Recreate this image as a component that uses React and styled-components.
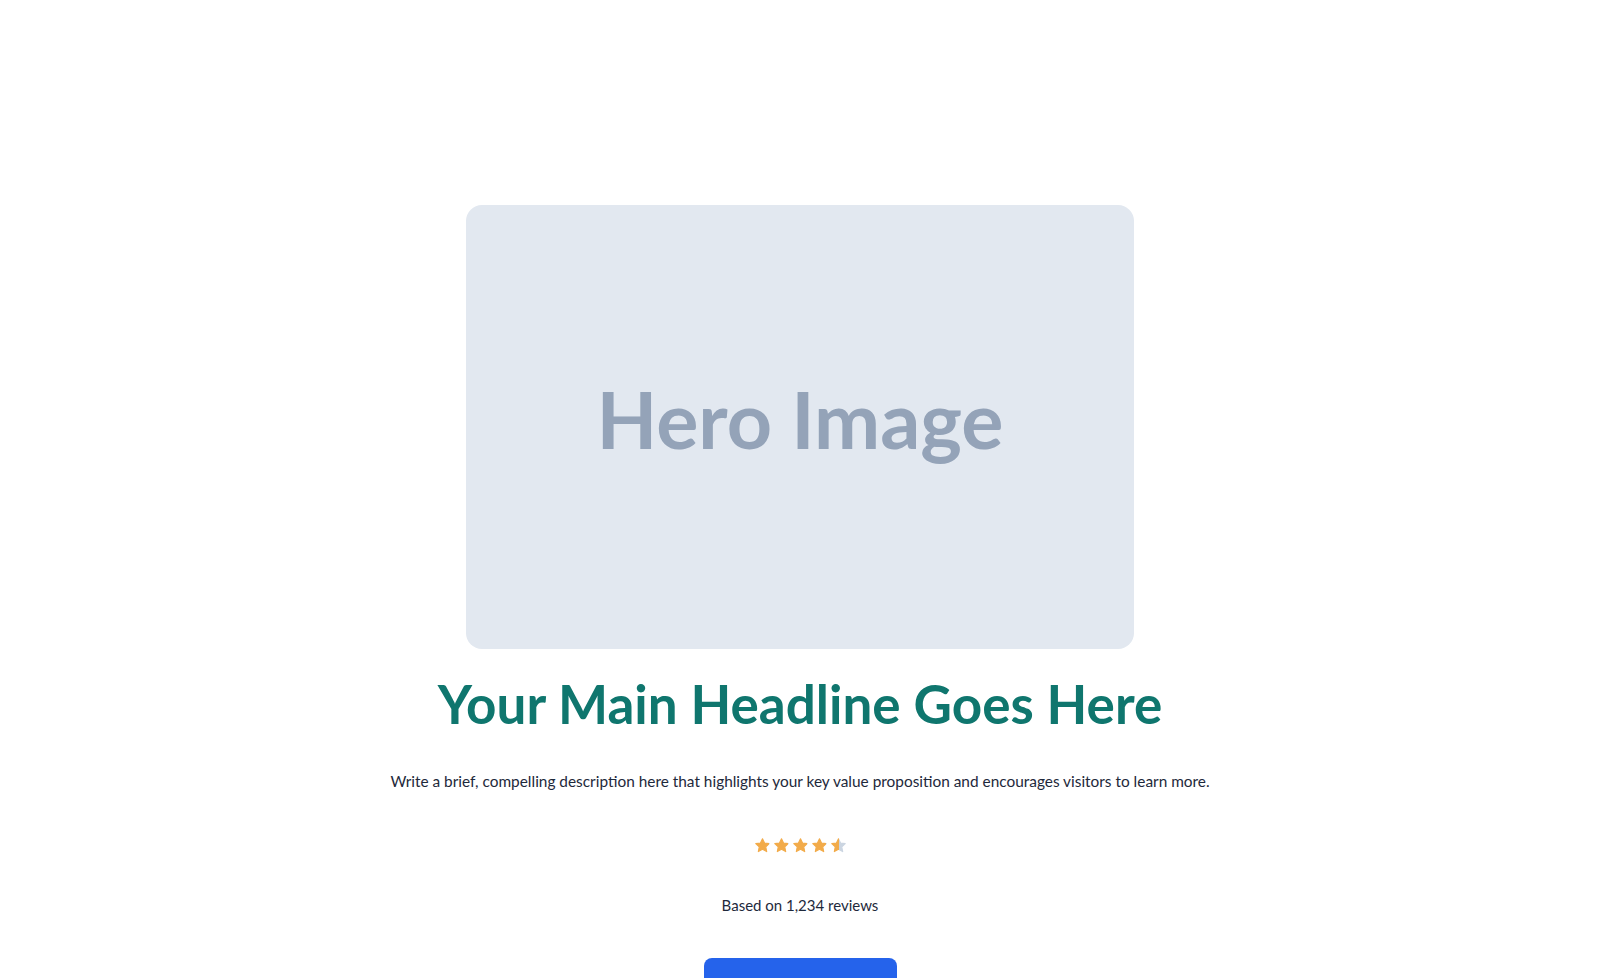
import React from 'react';
import styled, { createGlobalStyle } from 'styled-components';

const GlobalStyle = createGlobalStyle`
	html, body {
		margin: 0;
		padding: 0;
		background: #ffffff;
	}
	body {
		font-family: 'Lato', 'Inter', sans-serif;
		color: #1e293b;
	}
`;

const Hero = styled.section`
	display: flex;
	flex-direction: column;
	align-items: center;
	text-align: center;
	padding: 205px 24px 0;
`;

const ImageBox = styled.div`
	width: 668px;
	height: 444px;
	border-radius: 16px;
	background: #e2e8f0;
	display: flex;
	align-items: center;
	justify-content: center;
	font-family: 'Lato', sans-serif;
	font-weight: 700;
	font-size: 79px;
	color: #94a3b8;
	padding-bottom: 18px;
	box-sizing: border-box;
`;

const Headline = styled.h1`
	margin: 23px 0 0;
	font-family: 'Lato', sans-serif;
	font-weight: 700;
	font-size: 53px;
	line-height: 1.2;
	color: #0f766e;
`;

const Description = styled.p`
	margin: 34px 0 0;
	font-size: 15.4px;
	line-height: 1.5;
	color: #1e293b;
`;

const Stars = styled.div`
	display: flex;
	gap: 2px;
	margin-top: 44px;
`;

const Reviews = styled.p`
	margin: 42px 0 0;
	font-size: 15px;
	color: #1e293b;
`;

const Button = styled.button`
	margin-top: 44px;
	width: 193px;
	height: 60px;
	border: none;
	border-radius: 8px;
	background: #2563eb;
	color: #ffffff;
	font-family: 'Lato', sans-serif;
	font-size: 16px;
	font-weight: 600;
`;

const STAR = 'M12 2.5l2.9 6.1 6.6.8-4.9 4.6 1.3 6.6L12 17.3l-5.9 3.3 1.3-6.6-4.9-4.6 6.6-.8z';

function Star({ fill = 1, id }) {
	return (
		<svg width="17" height="17" viewBox="0 0 24 24">
			<defs>
				<linearGradient id={id}>
					<stop offset={fill} stopColor="#f2ab4a" />
					<stop offset={fill} stopColor="#cbd5e1" />
				</linearGradient>
			</defs>
			<path d={STAR} fill={`url(#${id})`} stroke={`url(#${id})`} strokeWidth="1.6" strokeLinejoin="round" />
		</svg>
	);
}

export default function App() {
	const rating = 4.5;
	return (
		<>
			<GlobalStyle />
			<Hero>
				<ImageBox>Hero Image</ImageBox>
				<Headline>Your Main Headline Goes Here</Headline>
				<Description>
					Write a brief, compelling description here that highlights your key value proposition and encourages visitors to learn more.
				</Description>
				<Stars>
					{[0, 1, 2, 3, 4].map((i) => (
						<Star key={i} id={`star-${i}`} fill={Math.max(0, Math.min(1, rating - i))} />
					))}
				</Stars>
				<Reviews>Based on 1,234 reviews</Reviews>
				<Button>Get Started</Button>
			</Hero>
		</>
	);
}
